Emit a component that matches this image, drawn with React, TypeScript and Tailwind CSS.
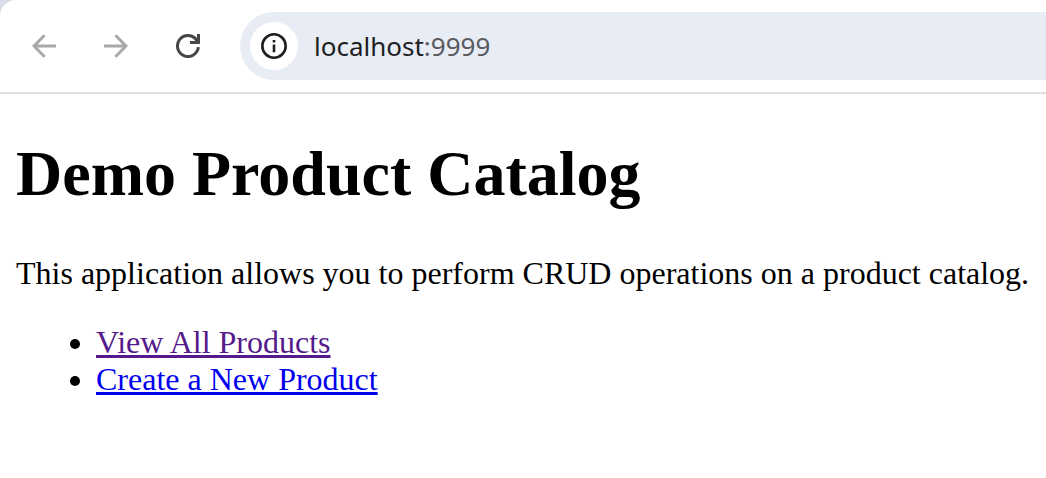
import type { ReactNode } from "react";

function ToolbarButton({ label, className, children }: { label: string; className: string; children: ReactNode }) {
  return (
    <button type="button" aria-label={label} className={`flex size-10 shrink-0 items-center justify-center rounded-full ${className}`}>
      <svg viewBox="0 0 24 24" className="size-6" fill="none" stroke="currentColor" aria-hidden="true">
        {children}
      </svg>
    </button>
  );
}

function BrowserToolbar() {
  return (
    <header className="bg-[#d9dfea]">
      <div className="flex h-[94px] items-center rounded-tl-2xl border-b-2 border-[#dfdfdf] bg-white pl-6">
        <nav aria-label="Browser" className="flex gap-8">
          <ToolbarButton label="Back" className="text-[#a9a9a9]">
            <path d="M24 12H2M12.6 1.2L2 12l10.6 10.8" strokeWidth="3" />
          </ToolbarButton>
          <ToolbarButton label="Forward" className="text-[#a9a9a9]">
            <path d="M0 12h22M11.4 1.2L22 12 11.4 22.8" strokeWidth="3" />
          </ToolbarButton>
          <ToolbarButton label="Reload" className="text-[#474747]">
            <path d="M22.4 13.2A10.5 10.5 0 1 1 19.6 4.8L22 8" strokeWidth="3" />
            <path d="M21 0h3v10H14V7h4.6L21 4.6z" fill="currentColor" stroke="none" />
          </ToolbarButton>
        </nav>
        <div className="ml-8 flex h-[68px] flex-1 items-center gap-4 rounded-l-full bg-[#e8ecf5] pl-[10px]">
          <button type="button" aria-label="View site information" className="flex size-12 items-center justify-center rounded-full bg-white text-[#1f1f1f]">
            <svg viewBox="0 0 28 28" className="size-7" fill="none" stroke="currentColor" strokeWidth="2.6" aria-hidden="true">
              <circle cx="14" cy="14" r="11.7" />
              <path d="M14 12.4v7.8M14 7.9v2.6" />
            </svg>
          </button>
          <div className="flex flex-1 font-['Noto_Sans',sans-serif] text-[26px] text-[#1f1f1f]">
            localhost<span className="text-[#5a5b5e]">:9999</span>
          </div>
        </div>
      </div>
    </header>
  );
}

export default function App() {
  return (
    <div className="min-h-screen bg-white">
      <BrowserToolbar />
      <main className="px-4 pt-[43px] font-['Liberation_Serif',serif] text-[32px] leading-[37px] text-black">
        <h1 className="text-[64px] leading-[74px] font-bold">Demo Product Catalog</h1>
        <p className="mt-11">This application allows you to perform CRUD operations on a product catalog.</p>
        <ul className="mt-8 list-disc pl-20">
          <li>
            <a href="#products" className="text-[#551a8b] underline decoration-3">View All Products</a>
          </li>
          <li>
            <a href="#new" className="text-[#0000ee] underline decoration-3">Create a New Product</a>
          </li>
        </ul>
      </main>
    </div>
  );
}
